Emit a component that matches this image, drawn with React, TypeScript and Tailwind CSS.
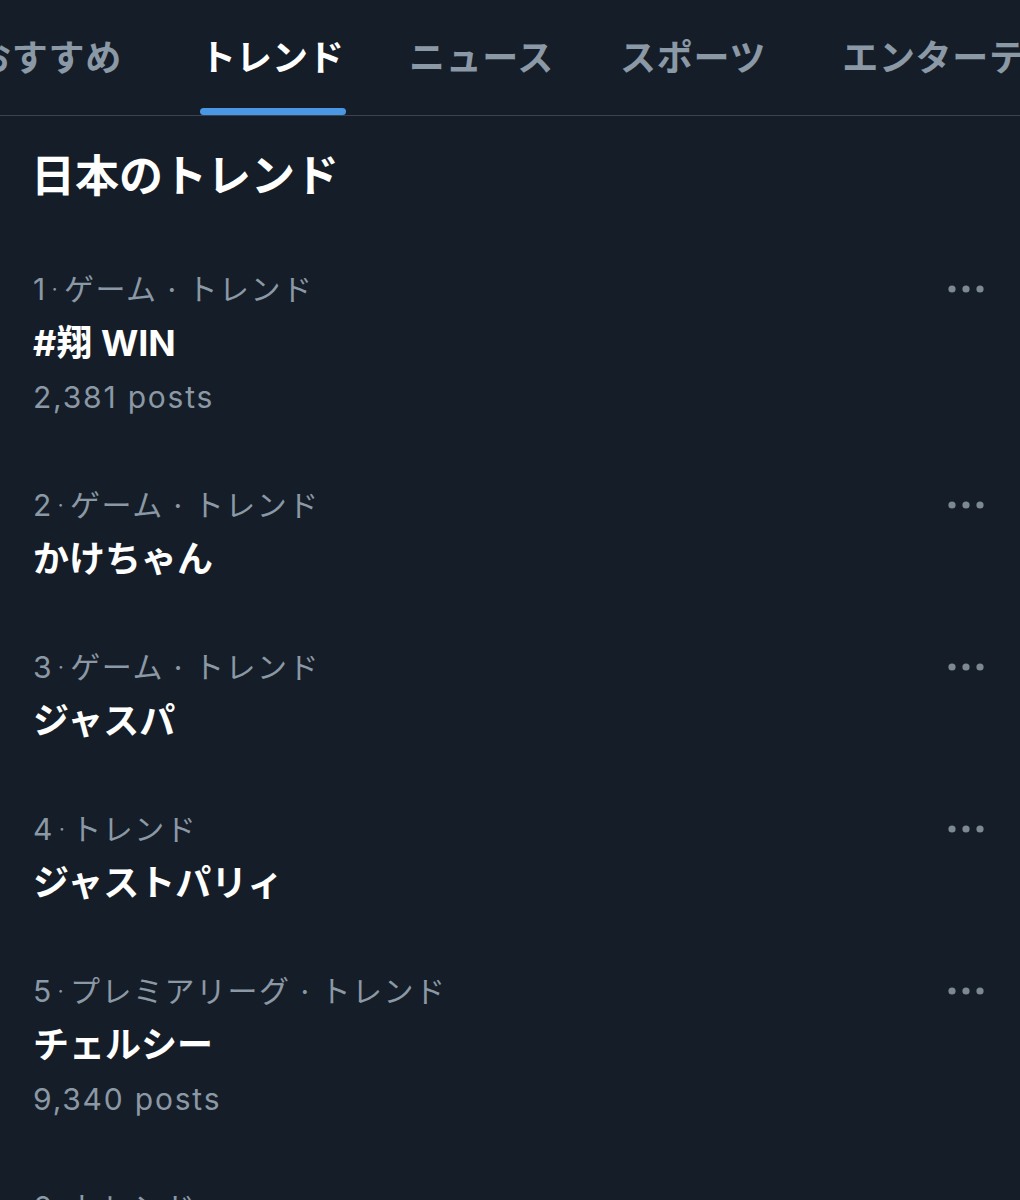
const tabs = [
  { label: "おすすめ", active: false, gap: "ml-[-25px]" },
  { label: "トレンド", active: true, gap: "ml-[78px]" },
  { label: "ニュース", active: false, gap: "ml-[65px]" },
  { label: "スポーツ", active: false, gap: "ml-[66px]" },
  { label: "エンターテイメント", active: false, gap: "ml-[76px]" },
];

type Trend = {
  rank: number;
  context: string;
  title: string;
  posts?: string;
};

const trends: Trend[] = [
  { rank: 1, context: "ゲーム · トレンド", title: "#翔 WIN", posts: "2,381 posts" },
  { rank: 2, context: "ゲーム · トレンド", title: "かけちゃん" },
  { rank: 3, context: "ゲーム · トレンド", title: "ジャスパ" },
  { rank: 4, context: "トレンド", title: "ジャストパリィ" },
  { rank: 5, context: "プレミアリーグ · トレンド", title: "チェルシー", posts: "9,340 posts" },
  { rank: 6, context: "トレンド", title: "" },
];

function MoreDots() {
  return (
    <svg width="36" height="8" viewBox="0 0 36 8" className="shrink-0">
      <circle cx="4" cy="4" r="3.6" fill="#7c8893" />
      <circle cx="18" cy="4" r="3.6" fill="#7c8893" />
      <circle cx="32" cy="4" r="3.6" fill="#7c8893" />
    </svg>
  );
}

function TrendRow({ trend }: { trend: Trend }) {
  return (
    <div className="flex items-start justify-between pl-[33px] pr-[36px] py-[27px]">
      <div className="flex flex-col">
        <div className="flex h-[54px] items-center text-[30px] tracking-[0.05em] text-[#8b98a5]">
          <span>{trend.rank}</span>
          <span className="mx-[5px] text-[20px]">·</span>
          <span>{trend.context}</span>
        </div>
        {trend.title && (
          <div className="flex h-[54px] items-center text-[36px] font-bold text-white">
            {trend.title}
          </div>
        )}
        {trend.posts && (
          <div className="flex h-[54px] items-center text-[30px] tracking-[0.06em] text-[#8b98a5]">
            {trend.posts}
          </div>
        )}
      </div>
      <div className="flex h-[54px] items-center">
        <MoreDots />
      </div>
    </div>
  );
}

export default function App() {
  return (
    <main
      className="h-[1200px] w-[1020px] overflow-hidden bg-[#151e28]"
      style={{ fontFamily: '"Inter", "Noto Sans CJK JP", sans-serif' }}
    >
      <nav className="h-[116px] overflow-hidden border-b border-[#3a444f]">
        <div className="flex h-full whitespace-nowrap">
          {tabs.map((tab) => (
            <div key={tab.label} className={`relative flex h-full shrink-0 items-center ${tab.gap}`}>
              <span
                className={
                  tab.active
                    ? "text-[36px] font-bold text-white"
                    : "text-[36px] font-bold tracking-[0.02em] text-[#8b98a5]"
                }
              >
                {tab.label}
              </span>
              {tab.active && (
                <div className="absolute bottom-0 left-0 right-[-2px] h-[7px] rounded-full bg-[#4a97e4]" />
              )}
            </div>
          ))}
        </div>
      </nav>

      <h1 className="flex h-[119px] items-center pl-[31px] text-[44px] font-bold text-white">
        日本のトレンド
      </h1>

      <div className="flex flex-col">
        {trends.map((trend) => (
          <TrendRow key={trend.rank} trend={trend} />
        ))}
      </div>
    </main>
  );
}
